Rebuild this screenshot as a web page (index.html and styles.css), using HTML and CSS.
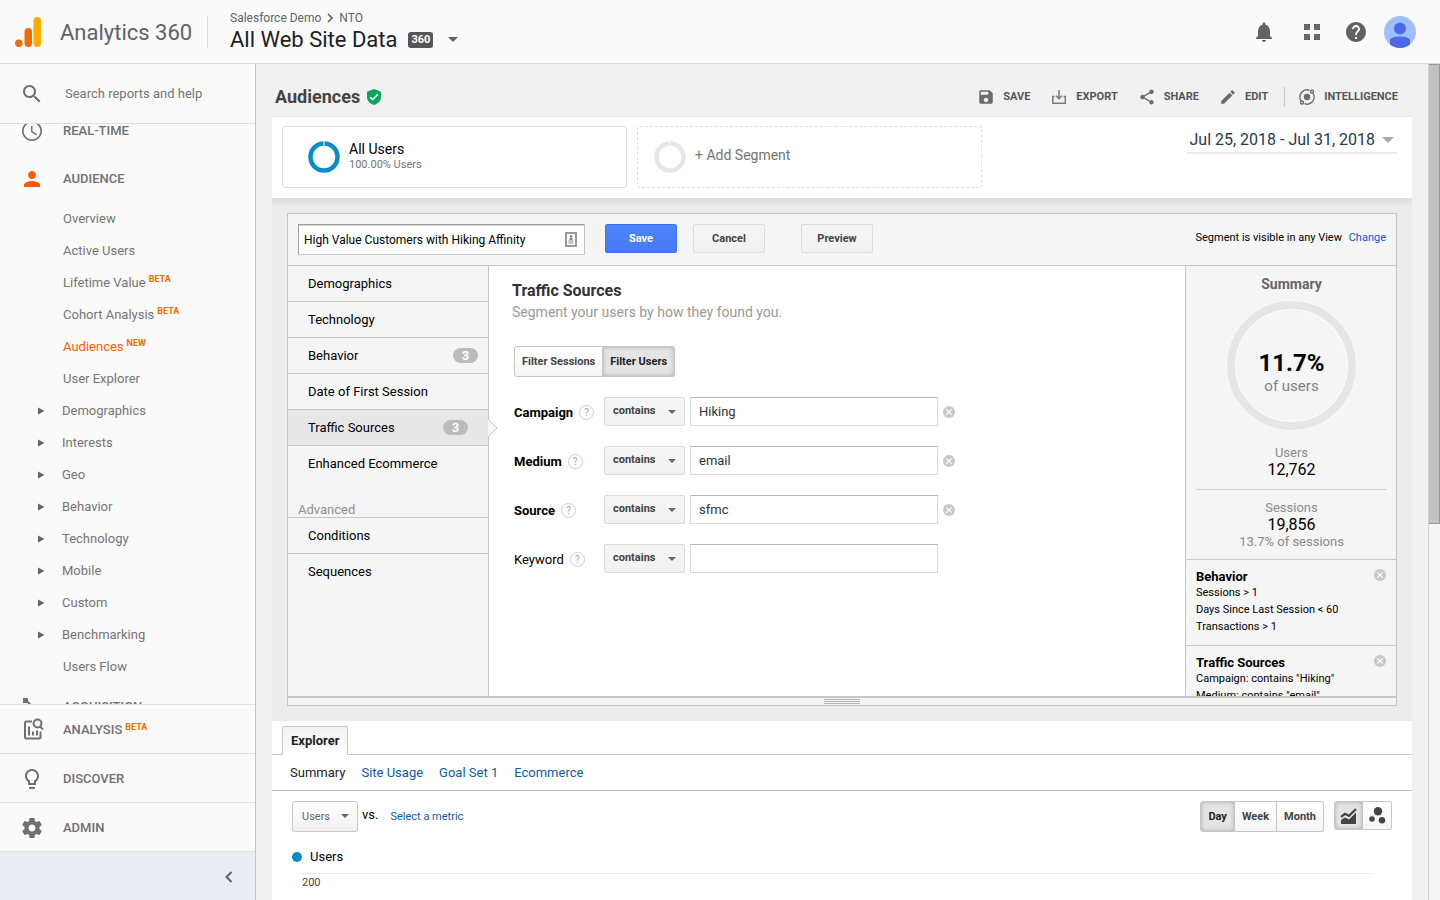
FILE: index.html
```html
<!DOCTYPE html>
<html lang="en">
<head>
<meta charset="utf-8">
<title>Analytics 360 - Audiences</title>
<link rel="stylesheet" href="styles.css">
</head>
<body>
<svg class="sprite" aria-hidden="true">
  <symbol id="remove" viewBox="0 0 12 12"><circle cx="6" cy="6" r="6" fill="#c8c8c8"/><path d="M3.3 3.3l5.4 5.4M8.700 3.300L3.300 8.700" stroke="#fff" stroke-width="1.200"/></symbol>
  <symbol id="expand" viewBox="0 0 7 8"><path d="M0 0.500v7L6.500 4z" fill="#666"/></symbol>
</svg>

<header class="topbar">
  <a class="brand" href="#">
    <svg width="28" height="32" viewBox="0 0 28 32" aria-hidden="true"><rect x="18.500" y="1" width="7.500" height="30" rx="3.700" fill="#ffab00"/><rect x="9.500" y="12" width="7.500" height="19" rx="3.700" fill="#ef6c00"/><circle cx="3.800" cy="27.300" r="3.700" fill="#ef6c00"/></svg>
    <span class="brand-name">Analytics 360</span>
  </a>
  <div class="account">
    <nav class="crumbs" aria-label="Account">
      <span>Salesforce Demo</span>
      <svg width="6" height="10" viewBox="0 0 6 10" aria-hidden="true"><path d="M1 1l4 4-4 4" fill="none" stroke="#5f6368" stroke-width="1.600"/></svg>
      <span>NTO</span>
    </nav>
    <button class="view-picker" type="button">
      <span>All Web Site Data</span>
      <span class="tag-360">360</span>
      <svg width="10" height="5" viewBox="0 0 10 5" aria-hidden="true"><path d="M0 0h10L5 5z" fill="#5f6368"/></svg>
    </button>
  </div>
  <div class="top-actions">
    <button type="button" class="icon-btn" aria-label="Notifications"><svg width="24" height="24" viewBox="0 0 24 24"><path fill="#5f6368" d="M12 22c1.100 0 2-.9 2-2h-4c0 1.100.89 2 2 2zm6-6v-5c0-3.070-1.640-5.640-4.500-6.320V4c0-.83-.67-1.500-1.500-1.500s-1.500.67-1.500 1.500v.68C7.630 5.360 6 7.920 6 11v5l-2 2v1h16v-1l-2-2z"/></svg></button>
    <button type="button" class="icon-btn" aria-label="Apps"><svg width="24" height="24" viewBox="0 0 24 24"><path fill="#666" d="M4 4h6v6H4zM14 4h6v6h-6zM4 14h6v6H4zM14 14h6v6h-6z"/></svg></button>
    <button type="button" class="icon-btn" aria-label="Help"><svg width="24" height="24" viewBox="0 0 24 24"><path fill="#5f6368" d="M12 2C6.480 2 2 6.480 2 12s4.480 10 10 10 10-4.480 10-10S17.520 2 12 2zm1 17h-2v-2h2v2zm2.070-7.750l-.9.920C13.450 12.900 13 13.500 13 15h-2v-.5c0-1.100.45-2.100 1.170-2.830l1.240-1.260c.37-.36.590-.86.590-1.410 0-1.100-.9-2-2-2s-2 .9-2 2H8c0-2.210 1.790-4 4-4s4 1.790 4 4c0 .88-.36 1.680-.93 2.250z"/></svg></button>
    <button type="button" class="icon-btn" aria-label="Profile"><svg width="32" height="32" viewBox="0 0 32 32"><circle cx="16" cy="16" r="16" fill="#9dbffb"/><circle cx="16" cy="12.500" r="6" fill="#4a69e2"/><path fill="#4a69e2" d="M6 24.500c0-3 5-4 10-4s10 1 10 4v4A16 16 0 0 1 16 32a16 16 0 0 1-10-3.500z"/></svg></button>
  </div>
</header>

<div class="shell">
  <aside class="sidebar">
    <label class="search">
      <svg width="24" height="24" viewBox="0 0 24 24" aria-hidden="true"><path fill="#6e6e6e" d="M15.500 14h-.79l-.28-.27C15.410 12.590 16 11.110 16 9.500 16 5.910 13.090 3 9.500 3S3 5.910 3 9.500 5.910 16 9.500 16c1.610 0 3.090-.59 4.230-1.570l.27.28v.79l5 4.990L20.490 19l-4.990-5zm-6 0C7.010 14 5 11.990 5 9.500S7.010 5 9.500 5 14 7.010 14 9.500 11.990 14 9.500 14z"/></svg>
      <input class="search-box" type="text" placeholder="Search reports and help" aria-label="Search reports and help">
    </label>
    <nav class="reports" aria-label="Reports">
      <div class="reports-scroll">
        <a class="section" href="#"><svg width="24" height="24" viewBox="0 0 24 24"><path fill="#707070" d="M11.990 2C6.470 2 2 6.480 2 12s4.470 10 9.990 10C17.520 22 22 17.520 22 12S17.520 2 11.990 2zM12 20.300c-4.600 0-8.300-3.700-8.300-8.300s3.700-8.300 8.300-8.300 8.300 3.700 8.300 8.300-3.700 8.300-8.300 8.300zM12.500 7h-1.500v6l5.250 3.150.75-1.230-4.500-2.670z"/></svg><span>REAL-TIME</span></a>
        <a class="section" href="#"><svg width="24" height="24" viewBox="0 0 24 24"><path fill="#ff5c00" d="M12 12c2.210 0 4-1.790 4-4s-1.790-4-4-4-4 1.790-4 4 1.790 4 4 4zm0 2c-2.670 0-8 1.340-8 4v2h16v-2c0-2.660-5.330-4-8-4z"/></svg><span>AUDIENCE</span></a>
        <a class="report" href="#">Overview</a>
        <a class="report" href="#">Active Users</a>
        <a class="report" href="#">Lifetime Value<span class="flag">BETA</span></a>
        <a class="report" href="#">Cohort Analysis<span class="flag">BETA</span></a>
        <a class="report current" href="#">Audiences<span class="flag">NEW</span></a>
        <a class="report" href="#">User Explorer</a>
        <a class="report group" href="#"><svg width="7" height="8"><use href="#expand"/></svg>Demographics</a>
        <a class="report group" href="#"><svg width="7" height="8"><use href="#expand"/></svg>Interests</a>
        <a class="report group" href="#"><svg width="7" height="8"><use href="#expand"/></svg>Geo</a>
        <a class="report group" href="#"><svg width="7" height="8"><use href="#expand"/></svg>Behavior</a>
        <a class="report group" href="#"><svg width="7" height="8"><use href="#expand"/></svg>Technology</a>
        <a class="report group" href="#"><svg width="7" height="8"><use href="#expand"/></svg>Mobile</a>
        <a class="report group" href="#"><svg width="7" height="8"><use href="#expand"/></svg>Custom</a>
        <a class="report group" href="#"><svg width="7" height="8"><use href="#expand"/></svg>Benchmarking</a>
        <a class="report" href="#">Users Flow</a>
        <a class="section" href="#"><svg width="24" height="24" viewBox="0 0 24 24"><path d="M3 3h5v5H3zM16 9h5v5h-5zM3 15h5v5H3z" fill="#707070"/><path d="M6 5l6 6.500h6M6 17l6-5.500" fill="none" stroke="#707070" stroke-width="2"/></svg><span>ACQUISITION</span></a>
      </div>
    </nav>
    <nav class="tools" aria-label="Tools">
      <a class="tool" href="#"><svg width="24" height="24" viewBox="0 0 24 24"><g fill="none" stroke="#707070" stroke-width="2"><path d="M12 3.500H6.500A1.500 1.500 0 0 0 5 5v14a1.500 1.500 0 0 0 1.500 1.500H19a1.500 1.500 0 0 0 1.500-1.500v-5.500"/><path d="M9 8.500v9M13 13.500v4M17 12.500v5"/><circle cx="17.500" cy="5.500" r="3.900"/><path d="M20 8.500l3 3"/></g></svg><span>ANALYSIS</span><span class="flag">BETA</span></a>
      <a class="tool" href="#"><svg width="24" height="24" viewBox="0 0 24 24"><path fill="#707070" d="M9 21c0 .55.450 1 1 1h4c.55 0 1-.45 1-1v-1H9v1zm3-19C8.140 2 5 5.140 5 9c0 2.380 1.190 4.470 3 5.740V17c0 .55.450 1 1 1h6c.55 0 1-.45 1-1v-2.260c1.810-1.270 3-3.360 3-5.740 0-3.860-3.140-7-7-7zm2.850 11.100l-.85.600V16h-4v-2.300l-.85-.6C7.800 12.160 7 10.630 7 9c0-2.760 2.240-5 5-5s5 2.240 5 5c0 1.630-.8 3.160-2.150 4.100z"/></svg><span>DISCOVER</span></a>
      <a class="tool" href="#"><svg width="24" height="24" viewBox="0 0 24 24"><path fill="#707070" d="M19.430 12.980c.040-.32.070-.64.070-.98s-.03-.66-.07-.98l2.110-1.650c.19-.15.240-.42.120-.64l-2-3.460c-.12-.22-.39-.3-.61-.22l-2.490 1c-.52-.4-1.080-.73-1.690-.98l-.38-2.650C14.460 2.180 14.250 2 14 2h-4c-.25 0-.46.180-.49.420l-.38 2.650c-.61.250-1.170.59-1.690.98l-2.490-1c-.23-.09-.49 0-.61.220l-2 3.460c-.13.220-.07.490.12.640l2.110 1.650c-.04.320-.07.650-.07.980s.030.66.070.98l-2.110 1.650c-.19.150-.24.420-.12.640l2 3.460c.12.220.39.300.61.220l2.490-1c.52.400 1.080.73 1.690.98l.38 2.650c.03.240.24.420.49.420h4c.25 0 .46-.18.490-.42l.38-2.650c.61-.25 1.170-.59 1.690-.98l2.490 1c.23.090.49 0 .61-.22l2-3.460c.12-.22.070-.49-.12-.64l-2.110-1.650zM12 15.500c-1.930 0-3.500-1.570-3.500-3.500s1.570-3.500 3.500-3.500 3.500 1.570 3.500 3.500-1.570 3.500-3.500 3.500z"/></svg><span>ADMIN</span></a>
    </nav>
    <button class="collapse" type="button" aria-label="Collapse menu"><svg width="8" height="12" viewBox="0 0 8 12"><path d="M6.500 1l-5 5 5 5" fill="none" stroke="#5f6368" stroke-width="2"/></svg></button>
  </aside>

  <main class="page">
    <div class="page-head">
      <h1>Audiences</h1>
      <svg width="14" height="16" viewBox="0 0 14 16" aria-hidden="true"><path fill="#0aa55a" d="M7 0l7 2.700V8c0 3.700-3 6.900-7 8-4-1.100-7-4.300-7-8V2.700z"/><path d="M3.200 8.200l2.500 2.500 5.100-5.300" fill="none" stroke="#fff" stroke-width="1.600"/></svg>
      <div class="page-actions">
        <button type="button"><svg width="18" height="18" viewBox="0 0 24 24"><path fill="#6b6b6b" d="M17 3H5c-1.110 0-2 .9-2 2v14c0 1.100.89 2 2 2h14c1.100 0 2-.9 2-2V7l-4-4zm-5 16c-1.660 0-3-1.340-3-3s1.340-3 3-3 3 1.340 3 3-1.340 3-3 3zm3-10H5V5h10v4z"/></svg>SAVE</button>
        <button type="button"><svg width="18" height="18" viewBox="0 0 18 18"><path d="M4.500 8.500H2.800v6.700h12.500V8.500h-1.800M9 2v8.500M6 7.800l3 3 3-3" fill="none" stroke="#7b7b7b" stroke-width="1.500"/></svg>EXPORT</button>
        <button type="button"><svg width="18" height="18" viewBox="0 0 24 24"><path fill="#6b6b6b" d="M18 16.080c-.76 0-1.440.3-1.960.77L8.910 12.700c.050-.23.090-.46.090-.7s-.04-.47-.09-.7l7.050-4.110c.54.500 1.250.81 2.040.81 1.660 0 3-1.340 3-3s-1.340-3-3-3-3 1.340-3 3c0 .24.040.47.090.7L8.040 9.810C7.500 9.310 6.790 9 6 9c-1.660 0-3 1.340-3 3s1.340 3 3 3c.79 0 1.500-.31 2.040-.81l7.120 4.160c-.05.210-.08.430-.08.650 0 1.610 1.310 2.920 2.920 2.920s2.920-1.310 2.920-2.920-1.310-2.920-2.920-2.920z"/></svg>SHARE</button>
        <button type="button"><svg width="18" height="18" viewBox="0 0 24 24"><path fill="#6b6b6b" d="M3 17.250V21h3.750L17.810 9.940l-3.750-3.750L3 17.250zM20.710 7.040c.39-.39.390-1.020 0-1.410l-2.340-2.340c-.39-.39-1.020-.39-1.410 0l-1.830 1.830 3.750 3.750 1.830-1.830z"/></svg>EDIT</button>
        <button type="button" class="intelligence"><svg width="18" height="18" viewBox="0 0 18 18"><g fill="none" stroke="#707070" stroke-width="1.400"><path d="M1.900 9.600A7.100 7.100 0 0 1 11.400 2.300M16.100 8.400A7.100 7.100 0 0 1 6.600 15.700"/><circle cx="14" cy="3.500" r="1.500"/><circle cx="4" cy="14.500" r="1.500"/><path d="M3.200 13.200A7 7 0 0 1 1.900 9.500M14.800 4.800A7 7 0 0 1 16.100 8.500"/></g><circle cx="9" cy="9" r="3.200" fill="#6b6b6b"/></svg>INTELLIGENCE</button>
      </div>
    </div>

    <section class="segments">
      <button type="button" class="segment">
        <svg width="32" height="32" viewBox="0 0 32 32"><circle cx="16" cy="16" r="13.500" fill="none" stroke="#058dc7" stroke-width="4.500"/><path d="M16 0v5" stroke="#fff"/></svg>
        <span class="segment-text"><span>All Users</span><small>100.00% Users</small></span>
      </button>
      <button type="button" class="segment add">
        <svg width="32" height="32" viewBox="0 0 32 32"><circle cx="16" cy="16" r="13.500" fill="none" stroke="#e6e6e6" stroke-width="4.500"/><path d="M16 0v5" stroke="#fff"/></svg>
        <span class="add-text">+ Add Segment</span>
      </button>
      <button type="button" class="dates">Jul 25, 2018 - Jul 31, 2018<svg width="12" height="6" viewBox="0 0 12 6"><path d="M0 0h12L6 6z" fill="#aaa"/></svg></button>
    </section>

    <section class="stage">
      <form class="editor">
        <div class="editor-head">
          <div class="name-field">
            <input type="text" value="High Value Customers with Hiking Affinity" aria-label="Segment name">
            <svg class="name-icon" width="12" height="15" viewBox="0 0 12 15" aria-hidden="true"><rect x="1" y="1" width="10" height="13" fill="#fff" stroke="#999" stroke-width="2"/><circle cx="6" cy="4.500" r="1.300" fill="#777"/><path d="M4.500 6h3v2h-3zM3.500 8.500h5v1h-5zM3.500 10.500h5v1h-5z" fill="#888"/></svg>
          </div>
          <button type="button" class="btn primary">Save</button>
          <button type="button" class="btn">Cancel</button>
          <button type="button" class="btn apart">Preview</button>
          <p class="visibility">Segment is visible in any View <a href="#">Change</a></p>
        </div>
        <div class="editor-body">
          <nav class="facets" aria-label="Segment conditions">
            <a href="#">Demographics</a>
            <a href="#">Technology</a>
            <a href="#">Behavior<span class="count">3</span></a>
            <a href="#">Date of First Session</a>
            <a href="#" class="active">Traffic Sources<span class="count">3</span><svg class="pointer" width="10" height="18" viewBox="0 0 10 18"><path d="M0 0.500h1L9 9l-8 8.500H0z" fill="#f5f5f5"/><path d="M0.500 0.500L9 9l-8.500 8.500" fill="none" stroke="#c6c6c6"/></svg></a>
            <a href="#" class="last">Enhanced Ecommerce</a>
            <h3>Advanced</h3>
            <a href="#">Conditions</a>
            <a href="#" class="last">Sequences</a>
          </nav>

          <div class="facet">
            <h2>Traffic Sources</h2>
            <p class="hint">Segment your users by how they found you.</p>
            <div class="facet-form">
              <div class="toggle">
                <button type="button">Filter Sessions</button><button type="button" class="on">Filter Users</button>
              </div>
              <div class="rule">
                <div class="rule-label"><label for="campaign" class="set">Campaign</label><span class="help">?</span></div>
                <span class="op"><select aria-label="Campaign match"><option>contains</option></select></span>
                <input id="campaign" type="text" value="Hiking">
                <button type="button" class="clear" aria-label="Clear campaign"><svg width="12" height="12"><use href="#remove"/></svg></button>
              </div>
              <div class="rule">
                <div class="rule-label"><label for="medium" class="set">Medium</label><span class="help">?</span></div>
                <span class="op"><select aria-label="Medium match"><option>contains</option></select></span>
                <input id="medium" type="text" value="email">
                <button type="button" class="clear" aria-label="Clear medium"><svg width="12" height="12"><use href="#remove"/></svg></button>
              </div>
              <div class="rule">
                <div class="rule-label"><label for="source" class="set">Source</label><span class="help">?</span></div>
                <span class="op"><select aria-label="Source match"><option>contains</option></select></span>
                <input id="source" type="text" value="sfmc">
                <button type="button" class="clear" aria-label="Clear source"><svg width="12" height="12"><use href="#remove"/></svg></button>
              </div>
              <div class="rule">
                <div class="rule-label"><label for="keyword">Keyword</label><span class="help">?</span></div>
                <span class="op"><select aria-label="Keyword match"><option>contains</option></select></span>
                <input id="keyword" type="text">
              </div>
            </div>
          </div>

          <div class="summary">
            <div class="summary-main">
              <h3>Summary</h3>
              <div class="ring">
                <strong>11.7%</strong>
                <span>of users</span>
              </div>
              <div class="stat">
                <span class="muted">Users</span>
                <span class="figure">12,762</span>
              </div>
              <div class="stat second">
                <span class="muted">Sessions</span>
                <span class="figure">19,856</span>
                <span class="muted">13.7% of sessions</span>
              </div>
            </div>
            <div class="criteria">
              <div class="criteria-head"><h4>Behavior</h4><button type="button" class="clear" aria-label="Remove Behavior"><svg width="12" height="12"><use href="#remove"/></svg></button></div>
              <p>Sessions &gt; 1</p>
              <p>Days Since Last Session &lt; 60</p>
              <p>Transactions &gt; 1</p>
            </div>
            <div class="criteria">
              <div class="criteria-head"><h4>Traffic Sources</h4><button type="button" class="clear" aria-label="Remove Traffic Sources"><svg width="12" height="12"><use href="#remove"/></svg></button></div>
              <p>Campaign: contains "Hiking"</p>
              <p>Medium: contains "email"</p>
              <p>Source: contains "sfmc"</p>
            </div>
          </div>
        </div>
        <div class="grip"><svg width="36" height="6" viewBox="0 0 36 6" aria-hidden="true"><path d="M0 .5h36M0 2.500h36M0 4.500h36" stroke="#b4b4b4"/></svg></div>
      </form>
    </section>

    <section class="explorer">
      <div class="tabs"><button type="button" class="tab">Explorer</button></div>
      <nav class="subtabs" aria-label="Explorer">
        <span>Summary</span>
        <a href="#">Site Usage</a>
        <a href="#">Goal Set 1</a>
        <a href="#">Ecommerce</a>
      </nav>
      <div class="controls">
        <span class="metric"><select aria-label="Metric"><option>Users</option></select></span>
        <span class="vs">vs.</span>
        <a class="pick" href="#">Select a metric</a>
        <div class="toggle period"><button type="button" class="on">Day</button><button type="button">Week</button><button type="button">Month</button></div>
        <div class="toggle charts">
          <button type="button" class="on" aria-label="Line chart"><svg width="17" height="17" viewBox="0 0 17 17"><path d="M1 17v-4l4-2.500 4 2 7-7V17z" fill="#444"/><path d="M1 9.800l4-3 4 2 7-6.800" fill="none" stroke="#444" stroke-width="2.200"/></svg></button>
          <button type="button" aria-label="Motion chart"><svg width="17" height="17" viewBox="0 0 17 17"><g fill="#444"><circle cx="9" cy="4.200" r="4.200"/><circle cx="3" cy="12" r="2.800"/><circle cx="13" cy="13.300" r="3.200"/></g></svg></button>
        </div>
      </div>
      <div class="legend"><span class="dot"></span>Users</div>
      <div class="chart"><span>200</span></div>
    </section>
  </main>

  <div class="scrollbar"><div class="thumb"></div></div>
</div>
</body>
</html>
```
FILE: styles.css
```css
* { box-sizing: border-box; }

html, body { height: 100%; }

body {
  margin: 0;
  display: flex;
  flex-direction: column;
  overflow: hidden;
  background: #f1f1f1;
  color: #000;
  font: 13px/16px Roboto, "Liberation Sans", sans-serif;
}

h1, h2, h3, h4, p { margin: 0; }
a { color: #15c; text-decoration: none; }
button, input, select { font: inherit; color: inherit; margin: 0; border-radius: 0; }
button { padding: 0; border: 0; background: none; }
svg { display: block; flex: none; }
.sprite { position: absolute; width: 0; height: 0; }

/* Top bar */
.topbar {
  flex: none;
  display: flex;
  align-items: center;
  height: 64px;
  padding: 0 24px 0 15px;
  background: #fafafa;
  border-bottom: 1px solid #d8d8d8;
}
.brand {
  display: flex;
  align-items: center;
  gap: 17px;
  width: 193px;
  height: 32px;
  border-right: 1px solid #dadada;
  color: #5f6368;
}
.brand-name { padding-top: 2px; font-size: 22px; line-height: 32px; white-space: nowrap; }
.account { padding-left: 22px; }
.crumbs {
  display: flex;
  align-items: center;
  gap: 6px;
  color: #5f6368;
  font-size: 12px;
  line-height: 16px;
}
.view-picker {
  display: flex;
  align-items: center;
  gap: 11px;
  color: #202124;
  font-size: 22px;
  line-height: 28px;
}
.view-picker svg { margin-left: 4px; }
.tag-360 {
  padding: 0 3px;
  border-radius: 3px;
  background: #555;
  color: #fff;
  font-size: 11px;
  font-weight: 700;
  line-height: 16px;
}
.top-actions { display: flex; align-items: center; margin-left: auto; }
.icon-btn { margin-left: 24px; }
.icon-btn:nth-child(n+3) { margin-left: 20px; }
.icon-btn:last-child { margin-left: 16px; }

.shell { flex: 1; display: flex; min-height: 0; }

/* Sidebar */
.sidebar {
  flex: none;
  display: flex;
  flex-direction: column;
  width: 256px;
  background: #fafafa;
  border-right: 1px solid #c6c6c6;
  color: #707070;
}
.search {
  flex: none;
  display: flex;
  align-items: center;
  gap: 21px;
  height: 60px;
  padding-left: 20px;
  border-bottom: 1px solid #e0e0e0;
}
.search-box {
  width: 180px;
  padding: 0;
  border: 0;
  background: none;
}
.search-box::placeholder { color: #757575; opacity: 1; }
.reports { flex: 1; min-height: 0; overflow: hidden; }
.reports-scroll { margin-top: -17px; }
.section, .tool {
  display: flex;
  align-items: center;
  height: 48px;
  padding-left: 20px;
  color: #707070;
  font-weight: 500;
}
.section svg, .tool svg { margin-right: 19px; }
.report {
  display: flex;
  align-items: center;
  height: 32px;
  padding-left: 63px;
  color: #757575;
}
.report.group { padding-left: 38px; gap: 17px; }
.report.current { color: #ff5c00; }
.flag {
  align-self: flex-start;
  padding: 6px 0 0 3px;
  color: #ef6c00;
  font-size: 9px;
  font-weight: 700;
  line-height: 12px;
}
.tool .flag { padding-top: 14px; }
.tools { flex: none; }
.tool { height: 49px; padding-top: 2px; border-top: 1px solid #e0e0e0; }
.collapse {
  flex: none;
  display: flex;
  justify-content: flex-end;
  align-items: center;
  height: 49px;
  padding: 2px 22px 0 0;
  border-top: 1px solid #e0e0e0;
  background: #eaeef2;
}

/* Page */
.page {
  flex: 1;
  min-width: 0;
  display: flex;
  flex-direction: column;
  padding: 0 16px;
  overflow: hidden;
}
.page-head {
  flex: none;
  display: flex;
  align-items: center;
  height: 52px;
  padding: 13px 14px 0 3px;
  gap: 7px;
}
.page-head h1 { color: #444; font-size: 18px; line-height: 24px; }
.page-actions { display: flex; gap: 20px; margin-left: auto; }
.page-actions button {
  display: flex;
  align-items: center;
  gap: 8px;
  color: #555;
  font-size: 11px;
  font-weight: 700;
  line-height: 20px;
}
.page-actions .intelligence {
  margin-left: -4px;
  padding-left: 13px;
  border-left: 1px solid #c6c6c6;
}

.segments {
  flex: none;
  display: flex;
  gap: 10px;
  height: 82px;
  padding: 9px 15px 10px 10px;
  border-top: 1px solid #e6e6e6;
  background: #fff;
}
.segment {
  display: flex;
  align-items: center;
  gap: 9px;
  width: 345px;
  padding-left: 25px;
  border: 1px solid #dfdfdf;
  border-radius: 3px;
  text-align: left;
}
.segment-text { display: flex; flex-direction: column; font-size: 14px; line-height: 16px; }
.segment-text small { color: #757575; font-size: 11px; line-height: 16px; }
.segment.add { padding-left: 16px; border-style: dashed; color: #757575; font-size: 14px; }
.add-text { padding-bottom: 4px; }
.dates {
  display: flex;
  align-items: center;
  gap: 7px;
  align-self: flex-start;
  margin-left: auto;
  padding: 2px 3px 0 2px;
  height: 28px;
  border-bottom: 2px solid #ebebeb;
  color: #1f3a52;
  font-size: 16px;
}

/* Segment editor */
.stage {
  flex: none;
  padding: 15px;
  background: linear-gradient(#dcdcdc, #ececec 8px);
}
.editor { border: 1px solid #c6c6c6; background: #f5f5f5; }
.editor-head {
  display: flex;
  align-items: flex-start;
  height: 52px;
  padding: 10px;
  border-bottom: 1px solid #c6c6c6;
  font-size: 11px;
}
.name-field { position: relative; width: 287px; margin-right: 20px; }
.name-field input {
  width: 100%;
  height: 31px;
  padding: 0 28px 0 5px;
  border: 1px solid #c6c6c6;
  border-top-color: #a0a0a0;
  border-left-color: #a0a0a0;
  background: #fff;
  box-shadow: inset 0 1px 0 #d4d4d4;
  font-size: 12px;
}
.name-icon { position: absolute; top: 8px; right: 8px; }
.btn {
  width: 72px;
  height: 29px;
  margin-right: 16px;
  border: 1px solid #dcdcdc;
  border-radius: 2px;
  background: linear-gradient(#f5f5f5, #f1f1f1);
  color: #444;
  font-size: 11px;
  font-weight: 700;
}
.btn.primary { border-color: #3c74f0; background: linear-gradient(#4c85fc, #477af2); color: #fff; }
.btn.apart { margin-left: 20px; }
.visibility { margin-left: auto; padding-top: 6px; }
.visibility a { margin-left: 4px; }

.editor-body { display: flex; height: 430px; overflow: hidden; }
.facets { flex: none; width: 201px; border-right: 1px solid #c6c6c6; }
.facets a {
  position: relative;
  display: flex;
  align-items: center;
  justify-content: space-between;
  height: 36px;
  padding: 0 10px 0 20px;
  border-bottom: 1px solid #c6c6c6;
  color: #000;
}
.facets a.last { border-bottom-color: transparent; }
.facets a.active { padding-right: 20px; background: #e7e7e7; }
.facets h3 {
  height: 36px;
  padding: 20px 10px 0;
  border-bottom: 1px solid #c6c6c6;
  color: #8f8f8f;
  font-size: 13px;
  font-weight: 400;
  line-height: 15px;
}
.count {
  width: 25px;
  border-radius: 8px;
  background: #bbb;
  color: #fff;
  font-weight: 700;
  line-height: 15px;
  text-align: center;
}
.pointer { position: absolute; top: 9px; right: -10px; }

.facet { flex: 1; padding: 14px 23px; background: #fff; }
.facet h2 { color: #333; font-size: 16px; line-height: 22px; }
.hint { color: #999; font-size: 14px; line-height: 20px; }
.facet-form { padding: 24px 2px; }
.toggle { display: flex; }
.toggle button {
  height: 31px;
  padding: 0 7px;
  border: 1px solid #c6c6c6;
  border-left-width: 0;
  background: linear-gradient(#fff, #f5f5f5);
  color: #444;
  font-size: 11px;
  font-weight: 700;
}
.toggle button:first-child { border-left-width: 1px; border-radius: 3px 0 0 3px; }
.toggle button:last-child { border-radius: 0 3px 3px 0; }
.toggle button.on { background: #e4e4e4; box-shadow: inset 0 0 4px #aaa; color: #222; }
.facet-form .toggle { margin-bottom: 20px; }

.rule {
  display: grid;
  grid-template-columns: 90px 81px 253px auto;
  justify-content: start;
  align-items: center;
  height: 29px;
  margin-bottom: 20px;
}
.rule > input, .rule > .clear { margin-left: 5px; }
.rule > input {
  width: 248px;
  height: 29px;
  padding: 0 8px;
  border: 1px solid #d9d9d9;
  border-top-color: #b9b9b9;
  background: #fff;
  color: #333;
}
.rule-label { display: flex; align-items: center; gap: 6px; padding-top: 2px; }
.rule .set { font-weight: 700; }
.help {
  width: 15px;
  height: 15px;
  border: 1px solid #d0d0d0;
  border-radius: 50%;
  color: #aaa;
  font-size: 10px;
  line-height: 13px;
  text-align: center;
}
.op, .metric { position: relative; display: block; }
.op::after, .metric::after {
  content: "";
  position: absolute;
  top: 13px;
  right: 9px;
  border: 4px solid transparent;
  border-top-color: #666;
  border-bottom: 0;
  pointer-events: none;
}
.op select, .metric select {
  display: block;
  width: 100%;
  height: 29px;
  padding: 0 8px 2px;
  appearance: none;
  border: 1px solid #dcdcdc;
  border-radius: 2px;
  background: linear-gradient(#f5f5f5, #f1f1f1);
  color: #444;
  font-size: 11px;
  font-weight: 700;
}

/* Summary column */
.summary { flex: none; width: 211px; border-left: 1px solid #c6c6c6; overflow: hidden; }
.summary-main { padding: 9px 9px 9px 10px; text-align: center; }
.summary h3 { color: #666; font-size: 14px; line-height: 18px; }
.ring {
  display: flex;
  flex-direction: column;
  justify-content: center;
  width: 129px;
  height: 129px;
  margin: 8px auto 14px;
  padding-top: 14px;
  border: 8px solid #e6e6e6;
  border-radius: 50%;
  box-shadow: 0 0 0 1px #fafafa, inset 0 0 0 1px #fcfcfc;
}
.ring strong { font-size: 24px; line-height: 26px; }
.ring span { color: #808080; font-size: 15px; line-height: 20px; }
.stat { display: flex; flex-direction: column; padding-bottom: 10px; }
.stat.second { padding: 9px 0 0; border-top: 1px solid #d2d2d2; }
.muted { color: #8a8a8a; line-height: 17px; }
.figure { font-size: 16px; line-height: 18px; }
.second .muted:last-child { line-height: 16px; }
.criteria { padding: 9px 10px 10px; border-top: 1px solid #c9c9c9; font-size: 11px; line-height: 17px; }
.criteria-head { display: flex; justify-content: space-between; align-items: flex-start; }
.criteria h4 { font-size: 13px; line-height: 15px; }

.grip {
  display: flex;
  justify-content: center;
  height: 9px;
  padding-top: 1px;
  border-top: 2px solid #c6c6c6;
}

/* Explorer */
.explorer { flex: 1; background: #fff; }
.tabs { display: flex; height: 34px; padding: 5px 10px 0; border-bottom: 1px solid #c6c6c6; }
.tab {
  height: 29px;
  padding: 0 8px;
  border: 1px solid #c6c6c6;
  border-bottom: 0;
  border-radius: 2px 2px 0 0;
  background: linear-gradient(#f1f1f1, #fff);
  color: #222;
  font-weight: 700;
}
.subtabs {
  display: flex;
  align-items: center;
  gap: 16px;
  height: 36px;
  padding-left: 18px;
  border-bottom: 1px solid #c6c6c6;
  color: #222;
}
.subtabs a, .pick { color: #0c5ca6; }
.controls { display: flex; align-items: flex-start; padding: 10px 20px 0; }
.metric { width: 66px; margin-right: 4px; }
.metric select {
  height: 31px;
  padding: 0 9px;
  border-color: #c6c6c6;
  border-radius: 3px;
  background: linear-gradient(#fff, #f1f1f1);
  color: #666;
  font-weight: 400;
}
.vs { line-height: 28px; }
.pick { margin-left: 12px; font-size: 11px; line-height: 31px; }
.period { margin-left: auto; }
.charts { margin-left: 10px; }
.charts button { display: flex; align-items: center; justify-content: center; width: 29px; height: 29px; padding: 0; }
.legend { display: flex; align-items: center; gap: 8px; height: 25px; margin: 12px 20px 0; }
.dot { width: 10px; height: 10px; border-radius: 50%; background: #058dc7; }
.chart {
  margin: 4px 40px 0 27px;
  padding-left: 3px;
  border-top: 1px solid #ebebeb;
  color: #444;
  font-size: 11px;
  line-height: 18px;
}

.scrollbar {
  flex: none;
  width: 12px;
  border-left: 1px solid #d0d0d0;
  background: #f4f4f4;
}
.thumb { height: 55%; border: 1px solid #999; border-left: 0; background: #c2c2c2; }
```
